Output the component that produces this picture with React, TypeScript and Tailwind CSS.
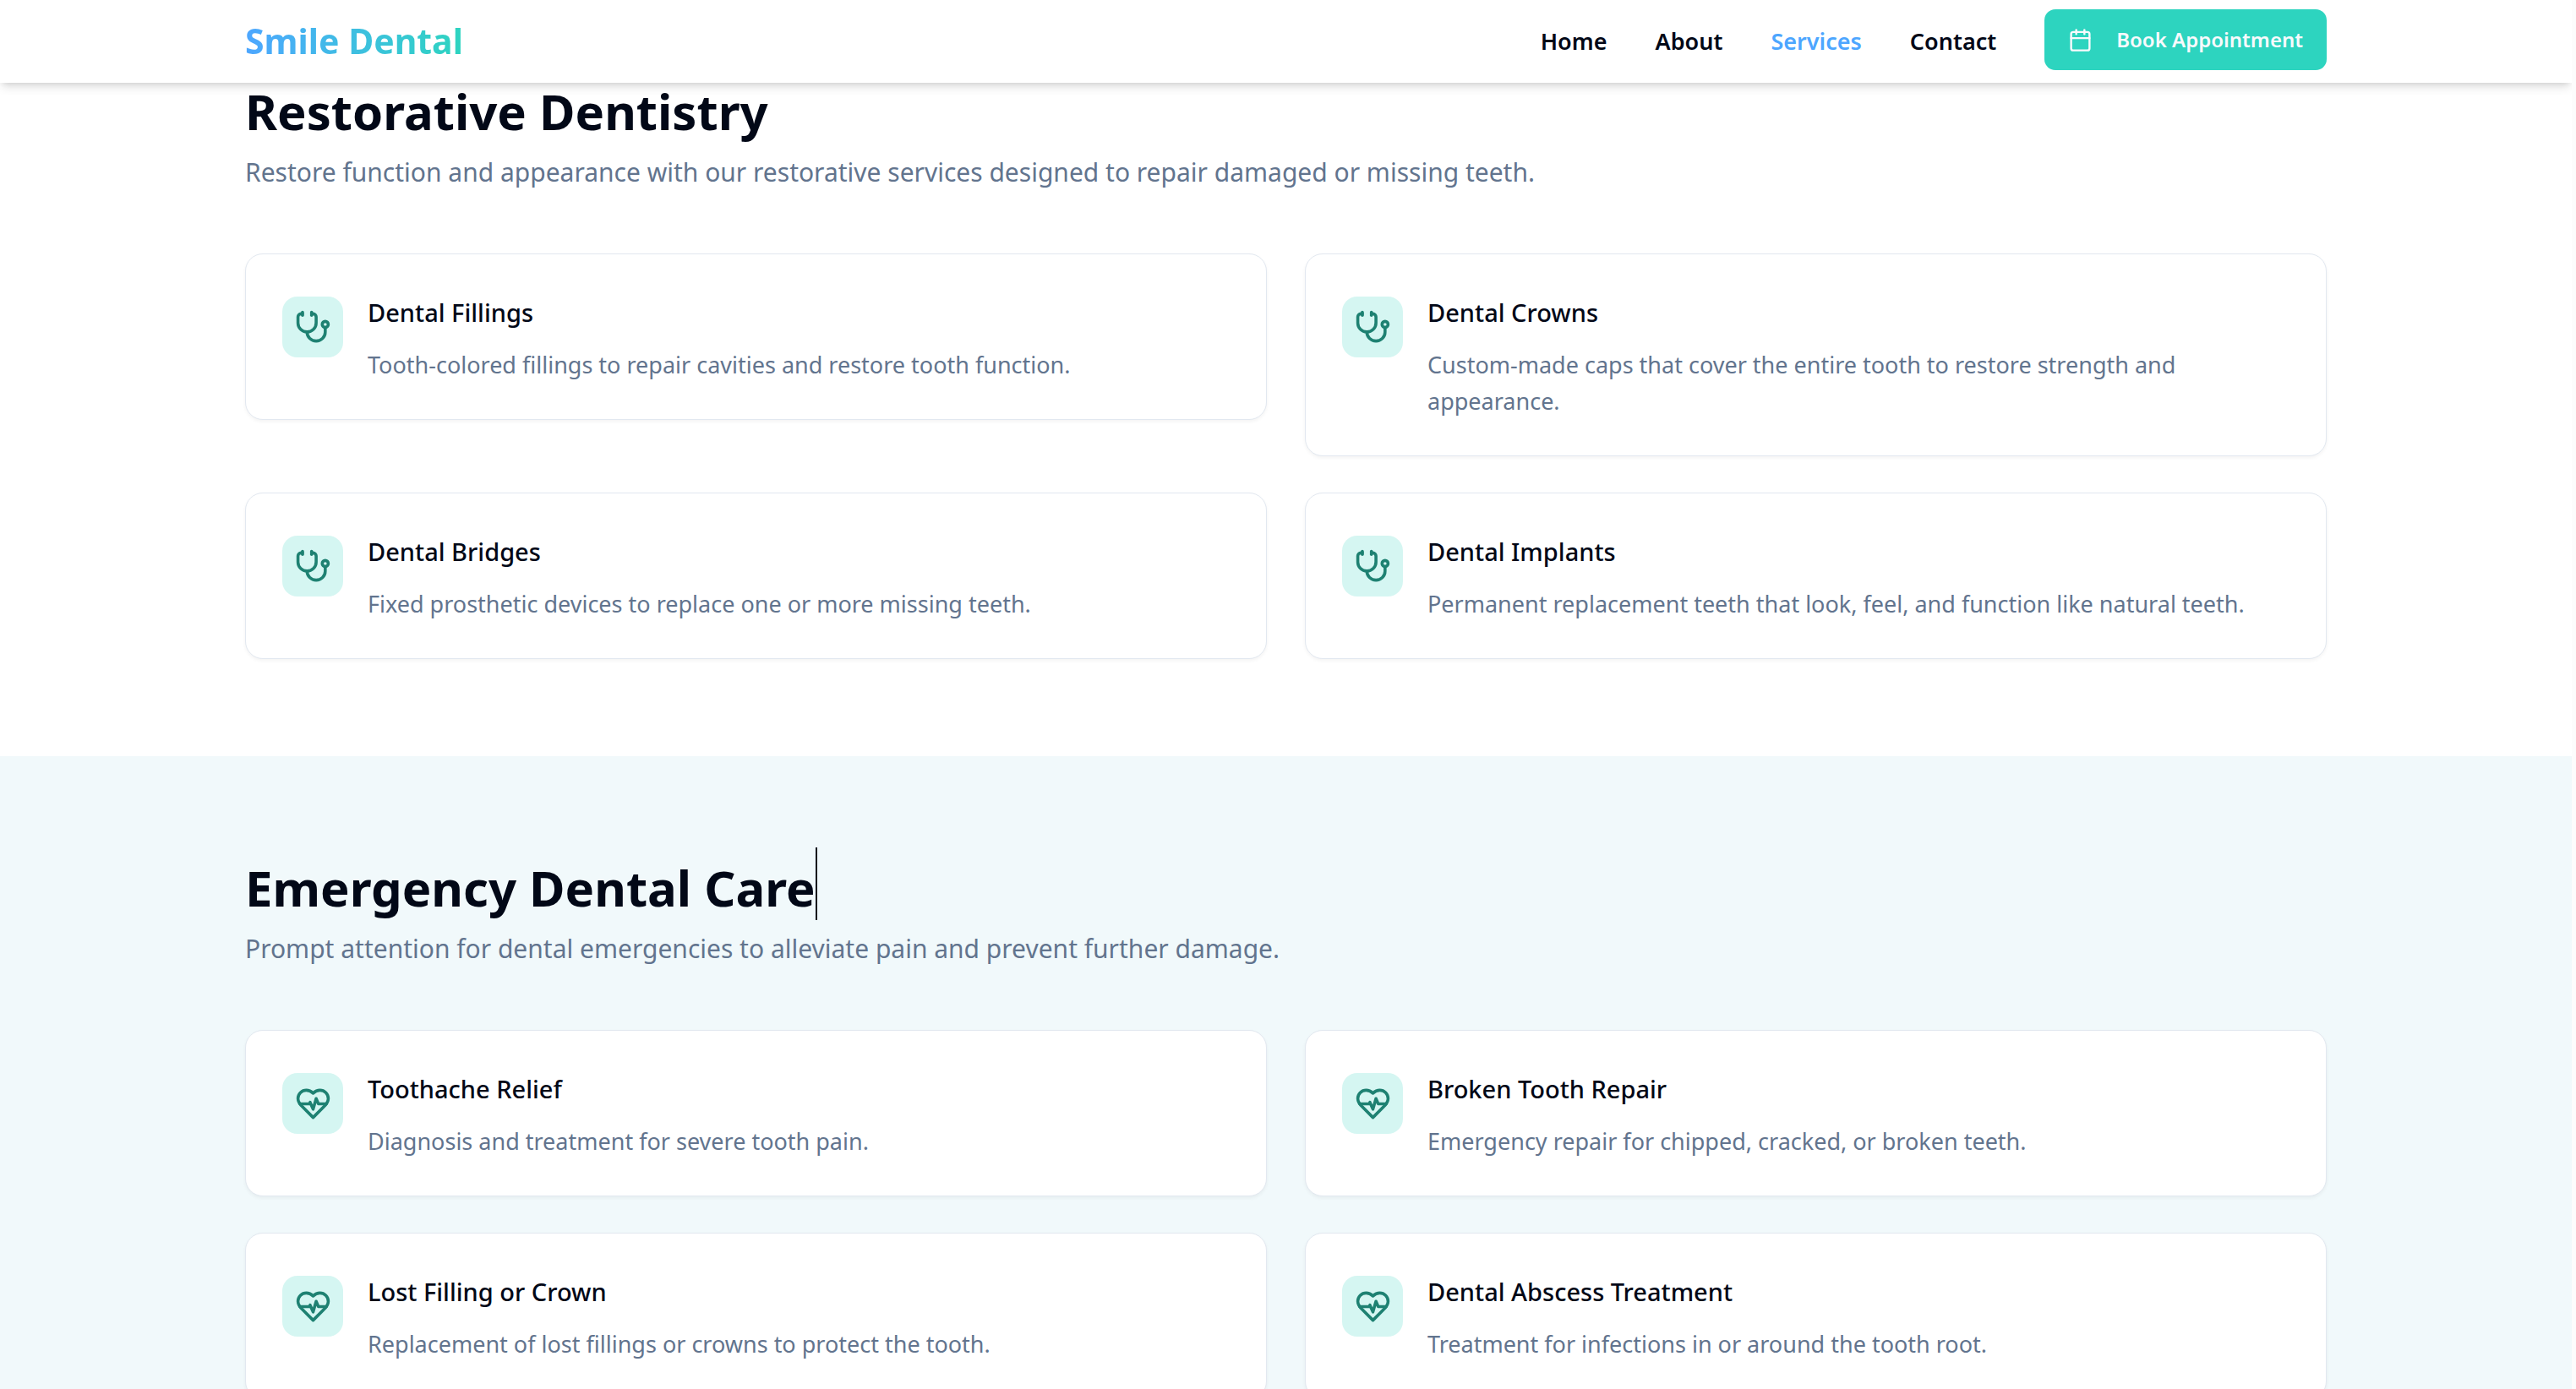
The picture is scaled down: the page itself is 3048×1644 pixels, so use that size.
import type { ComponentType } from "react";
import { Calendar, Stethoscope } from "lucide-react";

type IconProps = { className?: string };
type Service = { title: string; text: string };

function HeartPulseIcon({ className }: IconProps) {
  return (
    <svg
      viewBox="0 0 24 24"
      fill="none"
      stroke="currentColor"
      strokeWidth="2"
      strokeLinecap="round"
      strokeLinejoin="round"
      className={className}
      aria-hidden="true"
    >
      <path d="M19 14c1.49-1.46 3-3.21 3-5.5A5.5 5.5 0 0 0 16.5 3c-1.76 0-3 .5-4.5 2-1.5-1.5-2.74-2-4.5-2A5.5 5.5 0 0 0 2 8.5c0 2.3 1.5 4.05 3 5.5l7 7Z" />
      <path d="M3.22 12H9.5l.5-1 2 4.5 2-7 1.5 3.5h5.27" />
    </svg>
  );
}

const restorative: Service[] = [
  { title: "Dental Fillings", text: "Tooth-colored fillings to repair cavities and restore tooth function." },
  { title: "Dental Crowns", text: "Custom-made caps that cover the entire tooth to restore strength and appearance." },
  { title: "Dental Bridges", text: "Fixed prosthetic devices to replace one or more missing teeth." },
  { title: "Dental Implants", text: "Permanent replacement teeth that look, feel, and function like natural teeth." },
];

const emergency: Service[] = [
  { title: "Toothache Relief", text: "Diagnosis and treatment for severe tooth pain." },
  { title: "Broken Tooth Repair", text: "Emergency repair for chipped, cracked, or broken teeth." },
  { title: "Lost Filling or Crown", text: "Replacement of lost fillings or crowns to protect the tooth." },
  { title: "Dental Abscess Treatment", text: "Treatment for infections in or around the tooth root." },
];

const links = ["Home", "About", "Services", "Contact"];

function Header() {
  return (
    <header className="relative z-10 bg-white shadow-[0_7px_11px_-2px_rgba(0,0,0,0.12),0_4px_7px_-4px_rgba(0,0,0,0.12)]">
      <div className="mx-auto flex h-[98px] max-w-[2521px] items-center justify-between px-[29px]">
        <a
          href="#"
          className="bg-gradient-to-r from-[#4da6ff] to-[#2dd4bf] bg-clip-text text-[41px] font-bold text-transparent"
        >
          Smile Dental
        </a>
        <nav className="flex items-center gap-[57px]">
          {links.map((label) => (
            <a
              key={label}
              href="#"
              className={
                label === "Services"
                  ? "text-[27px] font-semibold text-[#4da6ff]"
                  : "text-[27px] font-semibold"
              }
            >
              {label}
            </a>
          ))}
          <button
            type="button"
            className="mb-1 flex h-[72px] items-center gap-7 rounded-[13px] bg-[#2dd4bf] px-7 text-2xl font-semibold text-[#f8fafc]"
          >
            <Calendar className="size-[29px]" strokeWidth={2} />
            Book Appointment
          </button>
        </nav>
      </div>
    </header>
  );
}

function ServiceCard({ service, icon: Icon }: { service: Service; icon: ComponentType<IconProps> }) {
  return (
    <article className="flex items-start gap-[29px] rounded-[21px] border border-slate-200 bg-white p-[43px] shadow-[0_2px_4px_0_rgba(0,0,0,0.05)]">
      <div className="mt-[7px] flex size-[72px] shrink-0 items-center justify-center rounded-[18px] bg-[#d5f6f2] text-[#1e8172]">
        <Icon className="size-[43px]" />
      </div>
      <div>
        <h3 className="text-[29px] leading-[52px] font-medium">{service.title}</h3>
        <p className="mt-3.5 text-[27px] leading-[43px] text-slate-500">{service.text}</p>
      </div>
    </article>
  );
}

function ServiceGroup({
  title,
  intro,
  services,
  icon,
  caret = false,
}: {
  title: string;
  intro: string;
  services: Service[];
  icon: ComponentType<IconProps>;
  caret?: boolean;
}) {
  return (
    <div className="mx-auto max-w-[2521px] px-[29px]">
      <h2 className="relative w-fit text-[58px] leading-[68px] font-bold">
        {title}
        {caret && <span className="absolute -top-3.5 left-full h-[86px] w-0.5 bg-[#020817]" />}
      </h2>
      <p className="mt-3 text-[30px] leading-[52px] text-slate-500">{intro}</p>
      <div className="mt-[70px] grid grid-cols-2 items-start gap-x-[45px] gap-y-[43px]">
        {services.map((service) => (
          <ServiceCard key={service.title} service={service} icon={icon} />
        ))}
      </div>
    </div>
  );
}

export default function App() {
  return (
    <div className="flex h-screen overflow-hidden bg-white font-['Noto_Sans','Open_Sans',sans-serif] text-[#020817]">
      <div className="h-full flex-1 overflow-hidden">
        <Header />
        <main>
          <section className="pb-[115px]">
            <ServiceGroup
              title="Restorative Dentistry"
              intro="Restore function and appearance with our restorative services designed to repair damaged or missing teeth."
              services={restorative}
              icon={Stethoscope}
            />
          </section>
          <section className="bg-[#f1f9fb] pt-[122px] pb-[115px]">
            <ServiceGroup
              title="Emergency Dental Care"
              intro="Prompt attention for dental emergencies to alleviate pain and prevent further damage."
              services={emergency}
              icon={HeartPulseIcon}
              caret
            />
          </section>
        </main>
      </div>
      <div className="w-[5px] shrink-0 bg-[#fcfcfc]" />
    </div>
  );
}
